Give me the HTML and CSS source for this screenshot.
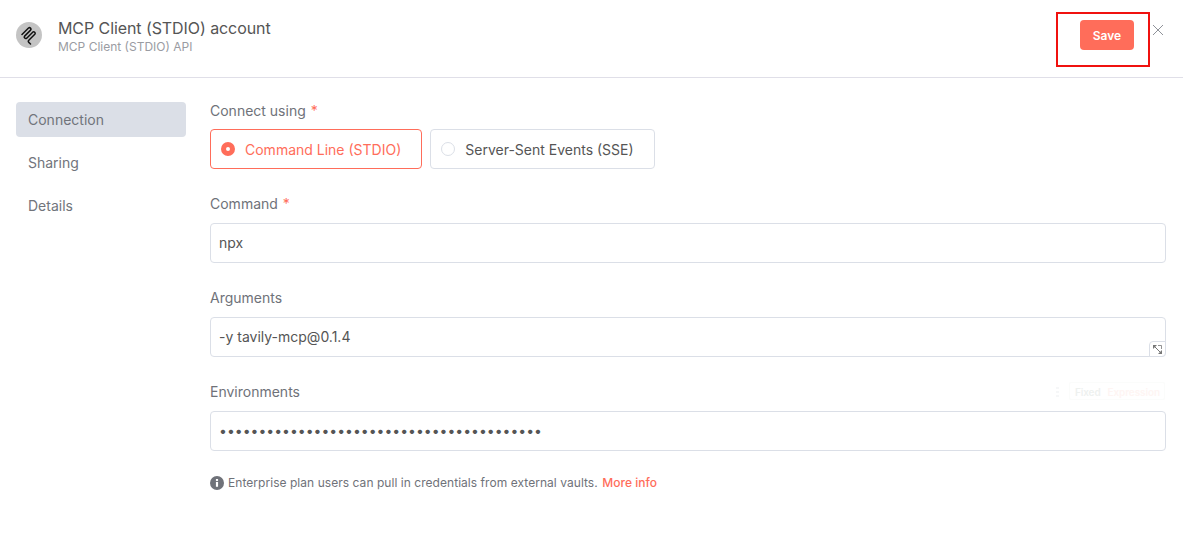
FILE: index.html
```html
<!DOCTYPE html>
<html lang="en">
<head>
    <meta charset="UTF-8">
    <title>MCP Client (STDIO) account</title>
    <link rel="stylesheet" href="styles.css">
</head>
<body>
    <header class="header">
        <div class="logo">
            <svg width="20" height="20" viewBox="0 0 20 20" fill="none" stroke="#111" stroke-width="1.5" stroke-linecap="round" stroke-linejoin="round">
                <path d="M3 9.5 L9.5 3 A1.5 1.5 0 0 1 11.6 5.1 L5.6 11.1 A1.5 1.5 0 0 0 7.7 13.2 L13.7 7.2 A1.5 1.5 0 0 1 15.8 9.3 L9.8 15.3 A1.5 1.5 0 0 0 9.8 17.4 L11.5 19"/>
            </svg>
        </div>
        <div class="titles">
            <div class="title">MCP Client (STDIO) account</div>
            <div class="subtitle">MCP Client (STDIO) API</div>
        </div>
        <div class="save-mark">
            <button class="save">Save</button>
        </div>
        <svg class="close" width="12" height="12" viewBox="0 0 12 12" fill="none" stroke="#8f9299" stroke-width="1">
            <path d="M1 1 L11 11 M11 1 L1 11"/>
        </svg>
    </header>
    <div class="main">
        <nav class="side">
            <a class="side-item active">Connection</a>
            <a class="side-item">Sharing</a>
            <a class="side-item">Details</a>
        </nav>
        <div class="form">
            <div class="field">
                <label class="label first">Connect using <span class="req">*</span></label>
                <div class="radios">
                    <div class="radio checked"><span class="dot"></span>Command Line (STDIO)</div>
                    <div class="radio"><span class="dot"></span>Server-Sent Events (SSE)</div>
                </div>
            </div>
            <div class="field">
                <label class="label">Command <span class="req">*</span></label>
                <div class="input">npx</div>
            </div>
            <div class="field">
                <label class="label">Arguments</label>
                <div class="input">-y tavily-mcp@0.1.4
                    <span class="grip">
                        <svg width="11" height="11" viewBox="0 0 11 11" fill="none" stroke="#777" stroke-width="1">
                            <path d="M2 2 L9 9"/>
                            <path d="M1 1 H5 L1 5 Z M10 10 H6 L10 6 Z" fill="#777" stroke="none"/>
                            <path d="M6 1.5 H9.5 V5" stroke-width="0.8"/>
                        </svg>
                    </span>
                </div>
            </div>
            <div class="field">
                <div class="label-row">
                    <label class="label">Environments</label>
                    <div class="options">
                        <span class="kebab"></span>
                        <div class="toggle"><span class="fixed">Fixed</span><span class="expr">Expression</span></div>
                    </div>
                </div>
                <div class="input">&bull;&bull;&bull;&bull;&bull;&bull;&bull;&bull;&bull;&bull;&bull;&bull;&bull;&bull;&bull;&bull;&bull;&bull;&bull;&bull;&bull;&bull;&bull;&bull;&bull;&bull;&bull;&bull;&bull;&bull;&bull;&bull;&bull;&bull;&bull;&bull;&bull;&bull;&bull;&bull;&bull;</div>
            </div>
            <p class="note">
                <svg class="info" width="14" height="14" viewBox="0 0 13 13">
                    <circle cx="6.5" cy="6.5" r="6.5" fill="#6f7279"/>
                    <rect x="5.5" y="5.5" width="2" height="4.5" fill="#fff"/>
                    <rect x="5.5" y="2.8" width="2" height="1.8" fill="#fff"/>
                </svg>
                <span>Enterprise plan users can pull in credentials from external vaults. <a class="more">More info</a></span>
            </p>
        </div>
    </div>
</body>
</html>
```

FILE: styles.css
```css
:root {
    --primary: #ff6d5a;
    --border: #dbdfe7;
    --text: #555;
    --label: #6f7279;
}

* {
    box-sizing: border-box;
}

body {
    margin: 0;
    background: #fff;
    color: var(--text);
    font-family: Inter, "Liberation Sans", sans-serif;
    font-size: 14px;
}

.header {
    display: flex;
    align-items: center;
    height: 78px;
    padding: 0 19px 7px 16px;
    border-bottom: 1px solid #e0dfe8;
}

.logo {
    display: flex;
    align-items: center;
    justify-content: center;
    width: 26px;
    height: 26px;
    border-radius: 50%;
    background: #c4c4c4;
    margin-right: 16px;
}

.titles {
    flex: 1;
    align-self: flex-start;
    padding-top: 18px;
}

.title {
    font-size: 16px;
    line-height: 20px;
    letter-spacing: -0.08px;
    color: #555;
}

.subtitle {
    margin-top: 1px;
    font-size: 12px;
    line-height: 15px;
    color: #9a9ca2;
}

.save-mark {
    display: flex;
    align-items: flex-start;
    justify-content: flex-end;
    width: 94px;
    height: 55px;
    margin-top: 9px;
    padding: 6px 14px 0 0;
    border: 2px solid #f0110f;
}

.save {
    width: 54px;
    height: 30px;
    border: none;
    border-radius: 4px;
    background: var(--primary);
    color: #fff;
    font-family: inherit;
    font-size: 12px;
    font-weight: 600;
}

.close {
    margin-left: 2px;
    margin-top: -10px;
}

.main {
    display: flex;
    padding: 24px 17px 0 16px;
}

.side {
    width: 170px;
    margin-right: 24px;
}

.side-item {
    display: block;
    height: 35px;
    line-height: 35px;
    margin-bottom: 8px;
    padding-left: 12px;
    border-radius: 4px;
    color: #71747b;
}

.side-item.active {
    background: #dbdfe7;
}

.form {
    flex: 1;
}

.field {
    margin-bottom: 25px;
}

.label {
    display: block;
    height: 19px;
    line-height: 19px;
    margin-bottom: 10px;
    color: var(--label);
}

.label.first {
    margin-top: -1px;
    margin-bottom: 9px;
}

.label-row {
    display: flex;
    justify-content: space-between;
    height: 29px;
}

.req {
    color: var(--primary);
    margin-left: 1px;
}

.radios {
    display: flex;
    gap: 8px;
}

.radio {
    display: flex;
    align-items: center;
    height: 40px;
    padding: 0 20px 0 10px;
    border: 1px solid var(--border);
    border-radius: 4px;
}

.radio.checked {
    border-color: var(--primary);
    color: var(--primary);
}

.dot {
    width: 14px;
    height: 14px;
    margin-right: 10px;
    border: 1px solid var(--border);
    border-radius: 50%;
}

.radio.checked .dot {
    border: 5px solid var(--primary);
}

.input {
    position: relative;
    height: 40px;
    line-height: 38px;
    padding: 0 8px;
    border: 1px solid var(--border);
    border-radius: 4px;
}

.grip {
    position: absolute;
    right: -1px;
    bottom: -1px;
    display: flex;
    align-items: center;
    justify-content: center;
    width: 17px;
    height: 16px;
    border: 1px solid var(--border);
    border-radius: 4px 0 4px 0;
    background: #fff;
}

.options {
    display: flex;
    align-items: center;
    gap: 10px;
    height: 18px;
    margin-right: 1px;
}

.kebab {
    width: 3px;
    height: 11px;
    background: radial-gradient(circle, #f6f7f8 1.2px, transparent 1.5px) 0 0 / 3px 4px;
}

.toggle {
    display: flex;
    align-items: center;
    gap: 7px;
    height: 18px;
    padding: 1px 4px 0 5px;
    border: 1px solid #fbfcfb;
    border-radius: 2px;
    font-size: 10px;
    font-weight: 600;
    letter-spacing: -0.1px;
}

.fixed {
    color: #eef1ef;
}

.expr {
    color: #fef5f3;
}

.note {
    display: flex;
    align-items: center;
    margin: -1px 0 0;
    font-size: 12px;
    letter-spacing: 0.045px;
    color: var(--label);
}

.info {
    flex: none;
    margin-right: 4px;
}

.more {
    margin-left: 1px;
    color: var(--primary);
    font-weight: 500;
}
```
